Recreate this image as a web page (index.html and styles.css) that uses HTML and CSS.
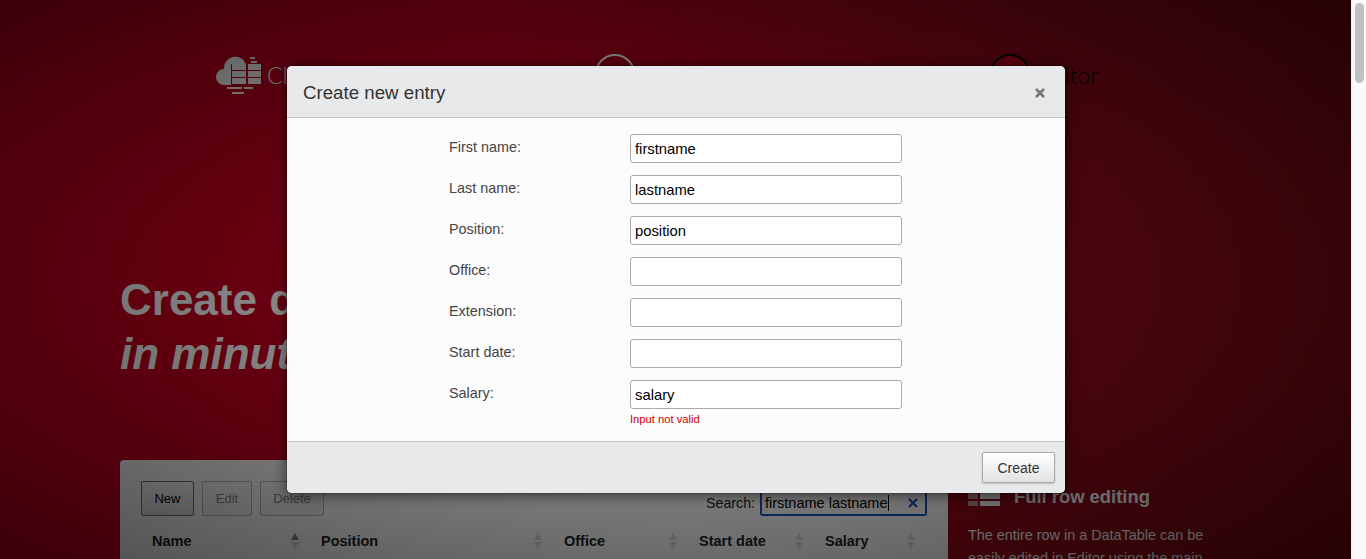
FILE: index.html
```html
<!DOCTYPE html>
<html lang="en">
<head>
<meta charset="utf-8">
<title>Create new entry</title>
<link rel="stylesheet" href="styles.css">
</head>
<body>
<div class="window">
	<div class="page">
		<div class="logos">
			<div class="logo">
				<svg width="46" height="41" viewBox="0 0 46 41">
					<path class="cloud" d="M15 10h15a11.4 11.4 0 0 0-22 5 8 8 0 0 0 0 16h7z"/>
					<path class="cloud" d="M34 3h5v2h-5zM35 7h6v2h-6zM16 10h14v6H16zM32 10h13v6H32zM16 17h14v6H16zM32 17h13v6H32zM16 24h14v6H16zM32 24h13v6H32zM11 33h15v2H11zM28 33h9v2h-9zM16 38h12v2H16z"/>
				</svg>
				<span>CloudTables</span>
			</div>
			<div class="logo">
				<div class="ring"></div>
				<span>DataTables</span>
			</div>
			<div class="logo logo_dark">
				<div class="ring"></div>
				<span>Editor</span>
			</div>
		</div>
		<div class="hero">
			<h1>Create data tables</h1>
			<h2>in minutes</h2>
		</div>
		<div class="content">
			<div class="card">
				<div class="toolbar">
					<div class="btns">
						<button class="btn btn_new">New</button>
						<button class="btn btn_edit btn_off">Edit</button>
						<button class="btn btn_del btn_off">Delete</button>
					</div>
					<div class="search">
						<label>Search:</label>
						<div class="search_box">firstname lastname<i class="caret"></i>
							<svg class="search_clear" width="10" height="10" viewBox="0 0 10 10"><path d="M1 1l8 8M9 1l-8 8"/></svg>
						</div>
					</div>
				</div>
				<div class="thead">
					<div class="th th_name">Name<span class="sort sort_up"></span></div>
					<div class="th th_pos">Position<span class="sort"></span></div>
					<div class="th th_office">Office<span class="sort"></span></div>
					<div class="th th_date">Start date<span class="sort"></span></div>
					<div class="th th_salary">Salary<span class="sort"></span></div>
				</div>
			</div>
			<div class="side">
				<div class="side_title">
					<svg width="32" height="26" viewBox="0 0 32 26">
						<path class="side_icon" opacity=".55" d="M0 0h10v5H0zM0 6h10v6H0zM0 13h10v6H0zM0 21h10v5H0z"/>
						<path class="side_icon" d="M12 0h20v5H12zM12 6h20v6H12zM12 13h20v6H12zM12 21h20v5H12z"/>
					</svg>
					<span>Full row editing</span>
				</div>
				<p>The entire row in a DataTable can be easily edited in Editor using the main editing form.</p>
			</div>
		</div>
		<div class="overlay"></div>
		<div class="modal">
			<div class="modal_head">
				<span>Create new entry</span>
				<svg class="close" width="10" height="10" viewBox="0 0 10 10"><path d="M1 1l8 8M9 1l-8 8"/></svg>
			</div>
			<div class="modal_body">
				<div class="row"><label>First name:</label><div class="field"><input type="text" value="firstname"></div></div>
				<div class="row"><label>Last name:</label><div class="field"><input type="text" value="lastname"></div></div>
				<div class="row"><label>Position:</label><div class="field"><input type="text" value="position"></div></div>
				<div class="row"><label>Office:</label><div class="field"><input type="text"></div></div>
				<div class="row"><label>Extension:</label><div class="field"><input type="text"></div></div>
				<div class="row"><label>Start date:</label><div class="field"><input type="text"></div></div>
				<div class="row"><label>Salary:</label><div class="field"><input type="text" value="salary"><div class="error">Input not valid</div></div></div>
			</div>
			<div class="modal_foot">
				<button class="create">Create</button>
			</div>
		</div>
	</div>
	<div class="scrollbar"><div class="thumb"></div></div>
</div>
</body>
</html>
```

FILE: styles.css
```css
html, body {
	margin: 0;
	height: 100%;
	overflow: hidden;
	font-family: "Liberation Sans", Arial, sans-serif;
}

.window {
	display: flex;
	height: 559px;
}

.page {
	position: relative;
	flex: 1;
	overflow: hidden;
	padding: 0 120px;
	color: #fff;
	background: linear-gradient(90deg, #c8001e 0%, #c4001e 35%, #900a18 75%, #800a14 100%);
}

.scrollbar {
	width: 15px;
	background: #fafafa;
	border-left: 1px solid #f0f0f0;
	box-sizing: border-box;
}

.thumb {
	width: 9px;
	height: 80px;
	margin: 3px 0 0 3px;
	border-radius: 5px;
	background: #c1c1c1;
}

/* logos */
.logos {
	display: grid;
	grid-template-columns: 379px 395px auto;
	height: 156px;
	padding-top: 54px;
	margin-left: 96px;
	box-sizing: border-box;
}

.logo {
	display: flex;
	align-items: flex-start;
	gap: 5px;
	font-family: "Lato", sans-serif;
	font-weight: 300;
	font-size: 23px;
	white-space: nowrap;
}

.logo span {
	margin-top: 7px;
}

.logo_dark {
	gap: 9px;
	color: #000;
}

.cloud {
	fill: #fff;
}

.ring {
	width: 36px;
	height: 36px;
	border: 2px solid #fff;
	border-radius: 50%;
}

.logo_dark .ring {
	border-color: #000;
	background: #d00020;
}

/* hero */
.hero {
	height: 304px;
	padding-top: 117px;
	box-sizing: border-box;
}

.hero h1, .hero h2 {
	margin: 0;
	font-size: 44px;
	line-height: 54px;
	white-space: nowrap;
}

.hero h2 {
	font-style: italic;
}

/* table card */
.content {
	display: flex;
	gap: 20px;
	margin-right: -17px;
}

.card {
	width: 828px;
	height: 300px;
	padding: 0 21px;
	box-sizing: border-box;
	border-radius: 4px 4px 0 0;
	color: #222;
	background: #fff;
	flex: none;
}

.toolbar {
	display: flex;
	justify-content: space-between;
	align-items: flex-end;
	padding-top: 21px;
}

.btns {
	display: flex;
	gap: 8px;
}

.btn {
	height: 35px;
	padding: 0;
	font: 13px "Liberation Sans", Arial, sans-serif;
	color: #000;
	background: linear-gradient(#fff, #e6e6e6);
	border: 1px solid #777;
	border-radius: 2px;
}

.btn_new { width: 53px; }
.btn_edit { width: 50px; }
.btn_del { width: 64px; }

.btn_off {
	color: #888;
	border-color: #bbb;
	background: linear-gradient(#fff, #f4f4f4);
}

.search {
	display: flex;
	align-items: center;
	gap: 5px;
	font-size: 14.5px;
}

.search label {
	font-size: 14.2px;
}

.search_box {
	position: relative;
	width: 167px;
	height: 26px;
	line-height: 22px;
	padding-left: 3px;
	box-sizing: border-box;
	border: 2px solid #1a55bb;
	border-top-color: transparent;
	border-radius: 3px;
	color: #000;
	white-space: nowrap;
}

.search_clear {
	position: absolute;
	right: 7px;
	top: 6px;
	fill: none;
	stroke: #1a55bb;
	stroke-width: 2.2;
}

.caret {
	display: inline-block;
	width: 1px;
	height: 16px;
	background: #000;
	vertical-align: -3px;
}

.thead {
	display: flex;
	padding-top: 17px;
	font-size: 14.5px;
	font-weight: bold;
}

.th {
	position: relative;
	padding-left: 10px;
	box-sizing: border-box;
}

.th_name { width: 170px; padding-left: 11px; }
.th_pos { width: 243px; }
.th_office { width: 135px; }
.th_date { width: 126px; }
.th_salary { width: 112px; }

.sort {
	position: absolute;
	right: 12px;
	top: 2px;
	width: 0;
	height: 0;
	border: 4px solid transparent;
	border-top: 7px solid #ddd;
	margin-top: 7px;
}

.sort::before {
	content: "";
	position: absolute;
	left: -4px;
	top: -16px;
	border: 4px solid transparent;
	border-top: 0;
	border-bottom: 7px solid #ddd;
}

.sort_up::before {
	border-bottom-color: #888;
}

/* side column */
.side {
	width: 250px;
	flex: none;
	color: #fff;
	font-size: 14.4px;
}

.side_title {
	display: flex;
	align-items: flex-start;
	gap: 14px;
	height: 64px;
	padding-top: 26px;
	box-sizing: border-box;
	font-size: 18.4px;
	font-weight: bold;
	line-height: 22px;
}

.side_title svg {
	margin-top: -6px;
}

.side_icon {
	fill: #fff;
}

.side p {
	margin: 0;
	line-height: 23px;
}

/* lightbox */
.overlay {
	position: absolute;
	inset: 0;
	background: radial-gradient(ellipse farthest-corner at center, rgba(0,0,0,.3) 0%, rgba(0,0,0,.7) 100%);
}

.modal {
	position: absolute;
	left: 287px;
	top: 66px;
	width: 778px;
	height: 427px;
	display: flex;
	flex-direction: column;
	color: #333;
	background: #fcfcfc;
	border-radius: 5px;
	overflow: hidden;
	box-shadow: 0 2px 14px rgba(0,0,0,.6), 0 0 0 1px rgba(0,0,0,.15);
}

.modal_head {
	display: flex;
	justify-content: space-between;
	align-items: center;
	height: 52px;
	padding: 3px 20px 0 16px;
	box-sizing: border-box;
	font-size: 18.7px;
	background: #e8e9eb;
	border-bottom: 1px solid #c6c6c6;
}

.close {
	fill: none;
	stroke: #777;
	stroke-width: 2.6;
}

.modal_body {
	flex: 1;
	padding-top: 16px;
	box-sizing: border-box;
}

.row {
	display: flex;
	min-height: 29px;
	margin-bottom: 12px;
	padding-left: 162px;
}

.row label {
	width: 181px;
	font-size: 14.4px;
	line-height: 26px;
	color: #444;
}

.field {
	width: 272px;
}

.field input {
	display: block;
	width: 100%;
	height: 29px;
	padding: 1px 4px 0;
	box-sizing: border-box;
	font: 14.8px "Liberation Sans", Arial, sans-serif;
	color: #000;
	background: #fff;
	border: 1px solid #aaa;
	border-radius: 3px;
}

.error {
	margin-top: 4px;
	font-size: 11.2px;
	color: #c00;
}

.modal_foot {
	display: flex;
	justify-content: flex-end;
	align-items: center;
	height: 52px;
	padding-right: 10px;
	box-sizing: border-box;
	background: #e8e9eb;
	border-top: 1px solid #c6c6c6;
}

.create {
	width: 73px;
	height: 31px;
	font: 14px "Liberation Sans", Arial, sans-serif;
	color: #333;
	background: linear-gradient(#fff, #e2e2e2);
	border: 1px solid #aaa;
	border-radius: 2px;
	box-shadow: 0 1px 2px rgba(0,0,0,.2);
}
```
